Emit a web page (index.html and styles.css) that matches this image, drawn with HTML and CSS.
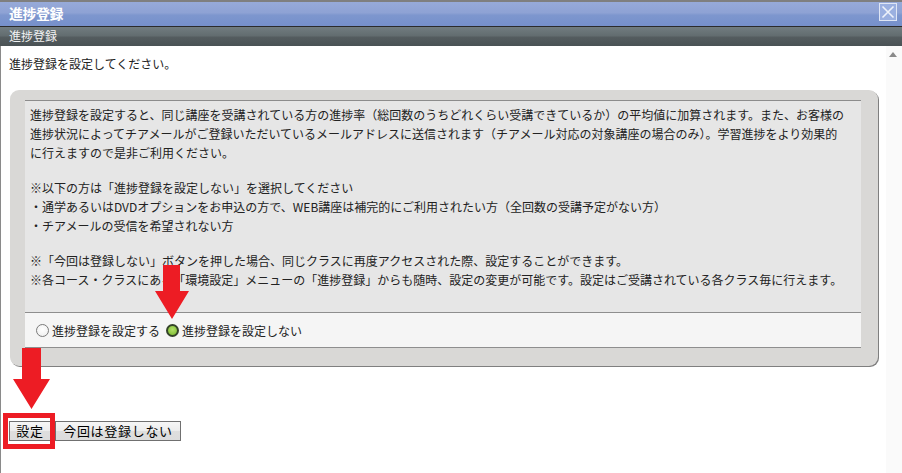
FILE: index.html
```html
<!DOCTYPE html>
<html lang="ja">
<head>
<meta charset="utf-8">
<title>進捗登録</title>
<link rel="stylesheet" href="styles.css">
</head>
<body>
<div class="dialog">
  <div class="titlebar">
    <span class="title">進捗登録</span>
    <span class="close" aria-label="閉じる">
      <svg width="18" height="18" viewBox="0 0 18 18">
        <rect x="0.5" y="0.5" width="17" height="17" fill="#9bb0e0" stroke="#dfe6f5"/>
        <path d="M3.5 3.5 L14.5 14.5 M14.5 3.5 L3.5 14.5" stroke="#eef2fa" stroke-width="1.6"/>
      </svg>
    </span>
  </div>
  <div class="subbar">進捗登録</div>
  <div class="content">
    <div class="main">
      <p class="lead">進捗登録を設定してください。</p>
      <div class="panel">
        <div class="inner">
          <div class="notes">
            <p>進捗登録を設定すると、同じ講座を受講されている方の進捗率（総回数のうちどれくらい受講できているか）の平均値に加算されます。また、お客様の<br>進捗状況によってチアメールがご登録いただいているメールアドレスに送信されます（チアメール対応の対象講座の場合のみ）。学習進捗をより効果的<br>に行えますので是非ご利用ください。</p>
            <p>※以下の方は「進捗登録を設定しない」を選択してください<br>・通学あるいはDVDオプションをお申込の方で、WEB講座は補完的にご利用されたい方（全回数の受講予定がない方）<br>・チアメールの受信を希望されない方</p>
            <p>※「今回は登録しない」ボタンを押した場合、同じクラスに再度アクセスされた際、設定することができます。<br>※各コース・クラスにある「環境設定」メニューの「進捗登録」からも随時、設定の変更が可能です。設定はご受講されている各クラス毎に行えます。</p>
          </div>
          <div class="choices">
            <label class="choice"><input class="radio" type="radio" name="prog">進捗登録を設定する</label>
            <label class="choice"><input class="radio" type="radio" name="prog" checked>進捗登録を設定しない</label>
          </div>
        </div>
      </div>
      <div class="buttons">
        <span class="btn-wrap">
          <button class="btn btn-set" type="button">設定</button>
          <span class="highlight"></span>
        </span>
        <button class="btn btn-skip" type="button">今回は登録しない</button>
      </div>
    </div>
    <div class="scrollbar"><span class="scroll-up"></span></div>
  </div>
  <svg class="arrow arrow-radio" width="34" height="54" viewBox="0 0 34 54">
    <polygon points="8,0 25,0 25,26 34,26 17,54 0,26 8,26" fill="#ed1c24"/>
  </svg>
  <svg class="arrow arrow-button" width="37" height="61" viewBox="0 0 37 61">
    <polygon points="9,0 28,0 28,31 37,31 18.5,61 0,31 9,31" fill="#ed1c24"/>
  </svg>
</div>
</body>
</html>
```

FILE: styles.css
```css
* { box-sizing: border-box; }

html, body {
  margin: 0;
  padding: 0;
  height: 100%;
  overflow: hidden;
  background: #ffffff;
}

body {
  font-family: "Noto Sans CJK JP", "Noto Sans", sans-serif;
  font-size: 12px;
  color: #222;
}

.dialog {
  position: relative;
  height: 473px;
  display: flex;
  flex-direction: column;
  border-top: 2px solid #7f7f7f;
}

.titlebar {
  height: 25px;
  flex: none;
  display: flex;
  align-items: flex-start;
  justify-content: space-between;
  background: linear-gradient(#97aad9 0%, #8ea2d4 45%, #7d96ce 55%, #7690cb 100%);
  border-bottom: 1px solid #2b2b2b;
}

.title {
  color: #fff;
  font-weight: bold;
  font-size: 14px;
  line-height: 22px;
  padding-left: 9px;
  letter-spacing: -0.5px;
}

.close {
  width: 18px;
  height: 18px;
  margin: 1px 5px 0 0;
  display: block;
}
.close svg { display: block; }

.subbar {
  height: 19px;
  flex: none;
  color: #f2f2f2;
  font-size: 12px;
  line-height: 18px;
  padding-left: 9px;
  background: linear-gradient(#717c80 0%, #636d70 45%, #545c5f 55%, #4a5255 100%);
}

.content {
  flex: 1;
  display: flex;
  box-shadow: inset 1px 0 0 #8a8a8a;
}

.main {
  flex: 1;
  padding-top: 8px;
}

.scrollbar {
  width: 16px;
  flex: none;
  background: #fafafa;
  padding: 6px 0 0 3px;
}

.scroll-up {
  display: block;
  width: 0;
  height: 0;
  border-left: 4.5px solid transparent;
  border-right: 4.5px solid transparent;
  border-bottom: 5px solid #8a8a8a;
}

.lead {
  margin: 0;
  padding-left: 9px;
  line-height: 19px;
}

.panel {
  margin: 17px 8px 0 10px;
  padding: 10px 17px 18px 15px;
  background: #d9d8d6;
  border-radius: 9px;
  box-shadow: 1px 1px 0 #7f7f7f;
}

.inner {
  background: #e6e6e6;
  border-top: 1px solid #8c8c8c;
}

.notes {
  padding: 4px 5px 7px 5px;
  line-height: 19px;
  white-space: nowrap;
}

.notes p {
  margin: 0 0 16px 0;
}

.choices {
  height: 36px;
  display: flex;
  align-items: center;
  padding-left: 11px;
  background: #f5f5f5;
  border-top: 1px solid #8e8e8e;
  border-bottom: 1px solid #8e8e8e;
}

.choice {
  display: flex;
  align-items: center;
  line-height: 19px;
  margin-right: 6px;
}

.radio {
  appearance: none;
  -webkit-appearance: none;
  width: 13px;
  height: 13px;
  margin: 0 3px 0 0;
  border-radius: 50%;
  border: 1px solid #7a7a7a;
  background: radial-gradient(circle at 50% 40%, #ffffff, #ececec);
}

.radio:checked {
  border: 2px solid #34432a;
  background: radial-gradient(circle at 50% 40%, #b2e06a, #86c23a 75%);
}

.buttons {
  margin-top: 55px;
  padding-left: 9px;
  display: flex;
  align-items: flex-start;
}

.btn-wrap {
  position: relative;
  display: block;
}

.btn {
  display: block;
  height: 20px;
  padding: 0;
  font-family: "Noto Sans CJK JP", "Noto Sans", sans-serif;
  font-size: 13px;
  line-height: 18px;
  letter-spacing: 0.7px;
  color: #000;
  border: 1px solid #707070;
  border-radius: 0;
  background: linear-gradient(#f6f6f6 0%, #ececec 50%, #dedede 51%, #dcdcdc 100%);
}

.btn-set { width: 42px; }
.btn-skip { width: 126px; margin-left: 4px; }

.highlight {
  position: absolute;
  left: -6px;
  top: -8px;
  width: 52px;
  height: 36px;
  border: 5px solid #ed1c24;
  pointer-events: none;
}

.arrow {
  position: absolute;
  display: block;
}

.arrow-radio { left: 155px; top: 263px; }
.arrow-button { left: 13px; top: 346px; }
```
